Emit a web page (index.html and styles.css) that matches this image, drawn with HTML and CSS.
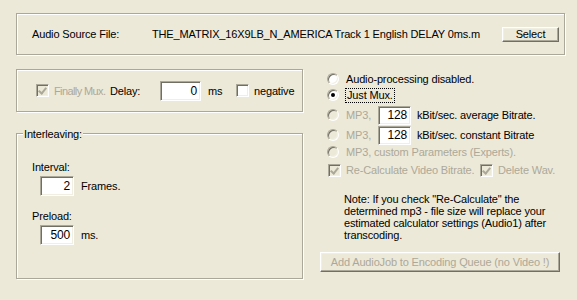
FILE: index.html
```html
<!DOCTYPE html>
<html lang="en">
<head>
  <meta charset="UTF-8" />
  <title>Audio</title>
  <link rel="stylesheet" href="styles.css">
</head>
<body>
  <div class="dlg">
    <div class="group source">
      <span class="src-label">Audio Source File:</span>
      <span class="src-file">THE_MATRIX_16X9LB_N_AMERICA Track 1 English DELAY 0ms.m</span>
      <span class="btn select">Select</span>
    </div>

    <div class="main">
      <div class="left">
        <div class="group mux">
          <span class="check mux-check off"><span class="box on"></span>Finally Mux.</span>
          <span class="delay-label">Delay:</span>
          <span class="edit delay-edit">0</span>
          <span class="ms-label">ms</span>
          <span class="check"><span class="box"></span>negative</span>
        </div>

        <div class="group inter">
          <span class="legend">Interleaving:</span>
          <div class="field-label">Interval:</div>
          <div class="field-row"><span class="edit small">2</span>Frames.</div>
          <div class="field-label second">Preload:</div>
          <div class="field-row"><span class="edit small">500</span>ms.</div>
        </div>
      </div>

      <div class="right">
        <div class="radio r1"><span class="dot"></span>Audio-processing disabled.</div>
        <div class="radio r2"><span class="dot on"></span><span class="focus">Just Mux.</span></div>
        <div class="radio r3 off"><span class="dot"></span><span class="mp3">MP3,</span><span class="edit rate">128</span><span class="rate-text">kBit/sec. average Bitrate.</span></div>
        <div class="radio r4 off"><span class="dot"></span><span class="mp3">MP3,</span><span class="edit rate">128</span><span class="rate-text">kBit/sec. constant Bitrate</span></div>
        <div class="radio r5 off"><span class="dot"></span>MP3, custom Parameters (Experts).</div>

        <div class="checks off">
          <span class="check recalc"><span class="box on"></span>Re-Calculate Video Bitrate.</span>
          <span class="check"><span class="box on"></span>Delete Wav.</span>
        </div>

        <p class="note">Note: If you check "Re-Calculate" the<br>determined mp3 - file size will replace your<br>estimated calculator settings (Audio1) after<br>transcoding.</p>

        <span class="btn add off">Add AudioJob to Encoding Queue (no Video !)</span>
      </div>
    </div>
  </div>
</body>
</html>
```

FILE: styles.css
```css
body { margin: 0; background: #ece9d8; font-family: "Liberation Sans", Arial, sans-serif; font-size: 11px; letter-spacing: -0.15px; color: #000; white-space: nowrap; }
.dlg { padding: 13px 0 0 16px; width: 561px; height: 287px; }

/* etched group box */
.group { position: relative; box-sizing: border-box; border: 1px solid #aca899; box-shadow: 1px 1px 0 #fff, inset 1px 1px 0 #fff; }

.off, .off .edit { color: #aca899; }

/* sunken edit field */
.edit { box-sizing: border-box; display: inline-block; height: 20px; line-height: 18px; padding: 0 3px 0 0; text-align: right; background: #fff; font-size: 12px;
  border: 1px solid; border-color: #aca899 #fff #fff #aca899; box-shadow: inset 1px 1px 0 #716f64, inset -1px -1px 0 #f1efe2; }
.off .edit { color: #000; }

/* raised button */
.btn { box-sizing: border-box; display: inline-flex; align-items: center; justify-content: center; border: 1px solid; border-color: #fff #716f64 #716f64 #fff;
  box-shadow: inset -1px -1px 0 #aca899, inset 1px 1px 0 #f1efe2; background: #ece9d8; }

/* check box */
.check { display: inline-flex; align-items: center; flex: none; }
.box { box-sizing: border-box; width: 13px; height: 13px; margin-right: 5px; background: #fff; position: relative; flex: none;
  border: 1px solid; border-color: #aca899 #fff #fff #aca899; box-shadow: inset 1px 1px 0 #716f64, inset -1px -1px 0 #f1efe2; }
.off .box { background: #ece9d8; }
.box.on::after { content: ""; position: absolute; left: 2px; top: 1px; width: 3px; height: 6px; border: solid #000; border-width: 0 2px 2px 0; transform: translate(1px, 0) rotate(40deg); }
.off .box.on::after { border-color: #aca899; }

/* top source box */
.source { display: flex; align-items: center; width: 549px; height: 42px; padding: 0 5px 0 15px; }
.src-label { width: 120px; }
.select { margin-left: auto; width: 57px; height: 15px; }

.main { display: flex; margin-top: 14px; }
.left { width: 287px; }

.mux { display: flex; align-items: center; height: 43px; padding-left: 19px; }
.mux > * { flex: none; }
.mux-check { width: 74px; letter-spacing: -0.6px; }
.delay-label { width: 50px; }
.delay-edit { width: 41px; height: 20px; }
.ms-label { margin-left: 7px; width: 28px; }

.inter { margin-top: 21px; height: 146px; padding: 26px 0 0 15px; }
.legend { position: absolute; left: 6px; top: -6px; padding: 0 1px; background: #ece9d8; line-height: 12px; }
.field-label { line-height: 14px; }
.field-label.second { margin-top: 13px; }
.field-row { display: flex; align-items: center; margin-top: 2px; margin-left: 8px; }
.edit.small { width: 34px; margin-right: 7px; }

.right { margin-left: 17px; width: 240px; }
.radio { display: flex; align-items: center; padding-left: 7px; }
.dot { box-sizing: border-box; width: 12px; height: 12px; margin-right: 7px; border-radius: 50%; background: #fff; position: relative; flex: none;
  border: 1px solid; border-color: #aca899 #fff #fff #aca899; box-shadow: inset 1px 1px 0 #716f64, inset -1px -1px 0 #f1efe2; }
.off .dot { background: #ece9d8; }
.dot.on::after { content: ""; position: absolute; left: 3px; top: 3px; width: 4px; height: 4px; border-radius: 50%; background: #000; }
.focus { outline: 1px dotted #000; padding: 0 1px; line-height: 13px; }

.r1 { margin-top: 2px; height: 16px; }
.r2 { height: 16px; }
.r3 { margin-top: 2px; height: 20px; }
.r4 { height: 20px; }
.r5 { height: 14px; }
.mp3 { width: 32px; }
.edit.rate { width: 33px; height: 19px; line-height: 17px; }
.rate-text { margin-left: 6px; color: #000; }

.checks { display: flex; align-items: center; margin-top: 3px; height: 16px; padding-left: 8px; }
.recalc { width: 152px; }

.note { margin: 15px 0 0 24px; line-height: 12px; }
.add { width: 240px; height: 20px; margin-top: 11px; }
```
